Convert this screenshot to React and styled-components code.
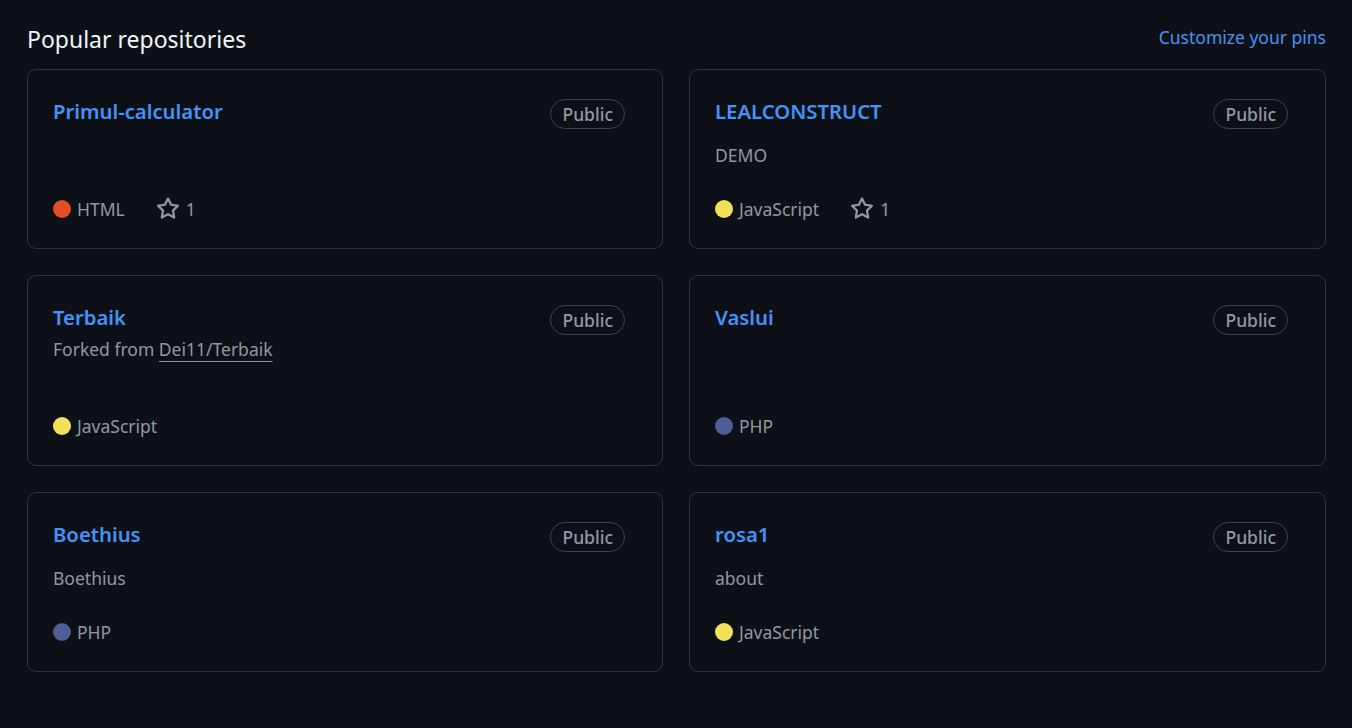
import React from 'react'
import styled, { createGlobalStyle } from 'styled-components'

const GlobalStyle = createGlobalStyle`
    html, body {
        margin: 0;
        padding: 0;
        background-color: #0d1117;
    }
    body {
        font-family: 'Noto Sans', 'Open Sans', sans-serif;
        color: #f0f6fc;
    }
`

const Page = styled.div`
    padding: 21px 26px 0 27px;
    min-height: 728px;
    box-sizing: border-box;
`

const Header = styled.div`
    display: flex;
    justify-content: space-between;
    align-items: center;
    height: 36px;
    margin-bottom: 12px;
`

const Heading = styled.h2`
    margin: 0;
    font-size: 23px;
    font-weight: 400;
    line-height: 36px;
    color: #f0f6fc;
`

const Customize = styled.a`
    font-size: 17.5px;
    color: #4493f8;
    text-decoration: none;
    line-height: 30px;
    margin-top: -4px;
    cursor: pointer;
`

const Grid = styled.div`
    display: grid;
    grid-template-columns: 636px 1fr;
    column-gap: 26px;
    row-gap: 26px;
`

const Card = styled.div`
    display: flex;
    flex-direction: column;
    padding: 24px 24px 26px 25px;
    border: 1px solid #30363d;
    border-radius: 9px;
    min-height: 180px;
    box-sizing: border-box;
`

const TitleRow = styled.div`
    display: flex;
    justify-content: space-between;
    align-items: flex-start;
    height: 36px;
`

const Title = styled.a`
    font-size: 20.3px;
    font-weight: 600;
    line-height: 34px;
    color: #4493f8;
    text-decoration: none;
    cursor: pointer;
`

const Label = styled.span`
    display: inline-flex;
    align-items: center;
    height: 30px;
    box-sizing: border-box;
    margin-top: 5px;
    margin-right: 13px;
    padding: 0 11px;
    border: 1px solid #3d444d;
    border-radius: 999px;
    font-size: 17.5px;
    font-weight: 500;
    color: #9198a1;
`

const ForkLine = styled.p`
    margin: 0 0 14px;
    font-size: 17.5px;
    line-height: 26px;
    color: #9198a1;

    a {
        color: #9198a1;
        text-decoration: underline;
        text-underline-offset: 5px;
        text-decoration-thickness: 1px;
    }
`

const Description = styled.p`
    flex: auto;
    margin: 12px 0 0;
    font-size: 17.5px;
    line-height: 27px;
    color: #9198a1;
`

const Meta = styled.div`
    display: flex;
    align-items: center;
    margin-top: 24px;
    height: 27px;
    font-size: 17.5px;
    color: #9198a1;
`

const Language = styled.span`
    display: inline-flex;
    align-items: center;
    margin-right: 31px;
`

const Dot = styled.span`
    width: 18px;
    height: 18px;
    border-radius: 50%;
    background-color: ${props => props.color};
    margin-right: 6px;
`

const Stars = styled.span`
    display: inline-flex;
    align-items: center;
    gap: 6px;

    svg {
        width: 24px;
        height: 24px;
        fill: #9198a1;
    }
`

const StarIcon = () => (
    <svg viewBox="0 0 16 16" aria-hidden="true">
        <path d="M8 .25a.75.75 0 0 1 .673.418l1.882 3.815 4.21.612a.75.75 0 0 1 .416 1.279l-3.046 2.97.719 4.192a.751.751 0 0 1-1.088.791L8 12.347l-3.766 1.98a.75.75 0 0 1-1.088-.79l.72-4.194L.818 6.374a.75.75 0 0 1 .416-1.28l4.21-.611L7.327.668A.75.75 0 0 1 8 .25Zm0 2.445L6.615 5.5a.75.75 0 0 1-.564.41l-3.097.45 2.24 2.184a.75.75 0 0 1 .216.664l-.528 3.084 2.769-1.456a.75.75 0 0 1 .698 0l2.77 1.456-.53-3.084a.75.75 0 0 1 .216-.664l2.24-2.183-3.096-.45a.75.75 0 0 1-.564-.41L8 2.694Z" />
    </svg>
)

const langColors = {
    HTML: '#e34c26',
    JavaScript: '#f1e05a',
    PHP: '#4f5d95'
}

const repos = [
    { name: 'Primul-calculator', lang: 'HTML', stars: 1 },
    { name: 'LEALCONSTRUCT', desc: 'DEMO', lang: 'JavaScript', stars: 1 },
    { name: 'Terbaik', fork: 'Dei11/Terbaik', lang: 'JavaScript' },
    { name: 'Vaslui', lang: 'PHP' },
    { name: 'Boethius', desc: 'Boethius', lang: 'PHP' },
    { name: 'rosa1', desc: 'about', lang: 'JavaScript' }
]

const RepoCard = ({ repo }) => (
    <Card>
        <TitleRow>
            <Title>{repo.name}</Title>
            <Label>Public</Label>
        </TitleRow>
        {repo.fork && (
            <ForkLine>Forked from <a>{repo.fork}</a></ForkLine>
        )}
        <Description>{repo.desc}</Description>
        <Meta>
            <Language>
                <Dot color={langColors[repo.lang]} />
                {repo.lang}
            </Language>
            {repo.stars && (
                <Stars>
                    <StarIcon />
                    {repo.stars}
                </Stars>
            )}
        </Meta>
    </Card>
)

const App = () => (
    <>
        <GlobalStyle />
        <Page>
            <Header>
                <Heading>Popular repositories</Heading>
                <Customize>Customize your pins</Customize>
            </Header>
            <Grid>
                {repos.map(repo => <RepoCard key={repo.name} repo={repo} />)}
            </Grid>
        </Page>
    </>
)

export default App
